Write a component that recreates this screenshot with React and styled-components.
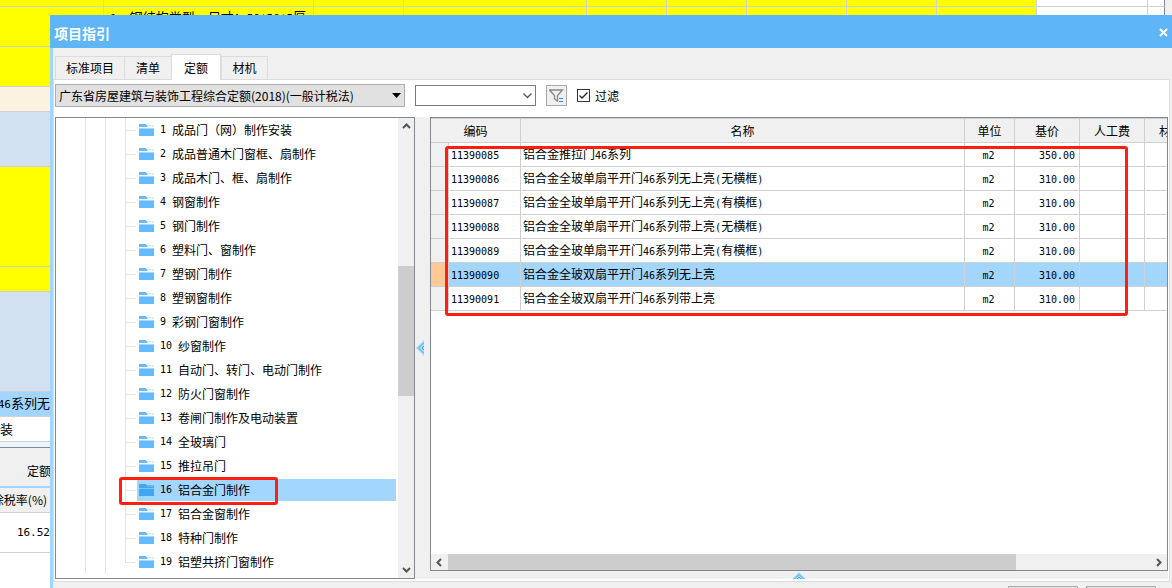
import React, { useState } from "react";
import styled, { createGlobalStyle } from "styled-components";

const GlobalStyle = createGlobalStyle`
    * {
        box-sizing: border-box;
    }

    body {
        margin: 0;
        background: #fff;
        color: #000;
        font-family: "Noto Sans CJK SC", "Noto Sans", sans-serif;
        font-size: 12px;
        line-height: 16px;
    }

    button,
    input,
    select {
        margin: 0;
        padding: 0;
        color: inherit;
        font: inherit;
    }
`;

// Dados
const sheetColumns = [
    { width: 104 },
    { width: 210, text: "1、钢结构类型、尺寸：50*50*5厚" },
    { width: 90 },
    { width: 183 },
    { width: 80 },
    { width: 80 },
    { width: 100 },
    { width: 90 },
    { width: 100 },
    { width: 111, color: "#fff" },
    { width: 17, color: "#fff", line: "#828790" },
];

const sheetRows = [
    { height: 40, color: "#ffff00" },
    { height: 25, color: "#fcf2e1" },
    { height: 55, color: "#d2e1f1" },
    { height: 100, color: "#ffff00" },
    { height: 25, color: "#ffff00" },
    { height: 100, color: "#d2e1f1" },
    { height: 25, color: "#a2d6ff", text: "46系列无", align: "flex-end" },
    { height: 25, color: "#fff", text: "装" },
    { height: 6, color: "#eaf5fe", line: "#828790" },
];

const tabs = ["标准项目", "清单", "定额", "材机"];

const chapters = [
    "成品门（网）制作安装",
    "成品普通木门窗框、扇制作",
    "成品木门、框、扇制作",
    "钢窗制作",
    "钢门制作",
    "塑料门、窗制作",
    "塑钢门制作",
    "塑钢窗制作",
    "彩钢门窗制作",
    "纱窗制作",
    "自动门、转门、电动门制作",
    "防火门窗制作",
    "卷闸门制作及电动装置",
    "全玻璃门",
    "推拉吊门",
    "铝合金门制作",
    "铝合金窗制作",
    "特种门制作",
    "铝塑共挤门窗制作",
];

const quotas = [
    { code: "11390085", name: "铝合金推拉门46系列", unit: "m2", price: "350.00" },
    { code: "11390086", name: "铝合金全玻单扇平开门46系列无上亮(无横框)", unit: "m2", price: "310.00" },
    { code: "11390087", name: "铝合金全玻单扇平开门46系列无上亮(有横框)", unit: "m2", price: "310.00" },
    { code: "11390088", name: "铝合金全玻单扇平开门46系列带上亮(无横框)", unit: "m2", price: "310.00" },
    { code: "11390089", name: "铝合金全玻单扇平开门46系列带上亮(有横框)", unit: "m2", price: "310.00" },
    { code: "11390090", name: "铝合金全玻双扇平开门46系列无上亮", unit: "m2", price: "310.00" },
    { code: "11390091", name: "铝合金全玻双扇平开门46系列带上亮", unit: "m2", price: "310.00" },
];

// Planilha de fundo
const Page = styled.div`
    position: relative;
    min-height: 100vh;
    overflow: hidden;
`;

const Sheet = styled.div`
    font-size: 13px;
    white-space: nowrap;
`;

const SheetLine = styled.div`
    display: flex;
    height: ${(props) => props.$height}px;
    background: #f0f0f0;
`;

const SheetCell = styled.div`
    flex: 0 0 ${(props) => props.$width}px;
    padding: 2px 6px 0;
    background: ${(props) => props.$color || "#ffff00"};
    border-right: 1px solid ${(props) => props.$line || "#d0d0d0"};
    border-bottom: 1px solid #d0d0d0;
    overflow: hidden;
`;

const SideRow = styled.div`
    display: flex;
    align-items: center;
    justify-content: ${(props) => props.$align || "flex-start"};
    width: 50px;
    height: ${(props) => props.$height}px;
    background: ${(props) => props.$color};
    border-bottom: ${(props) => props.$lineWidth || 1}px solid ${(props) => props.$line || "#d0d0d0"};
    overflow: hidden;
`;

const SideTitle = styled.span`
    padding: 8px 0 0 27px;
    font-size: 12px;
`;

const SideHead = styled.span`
    padding-right: 3px;
    font-size: 12px;
`;

// Janela
const Dialog = styled.section`
    position: absolute;
    top: 15px;
    right: 0;
    bottom: 0;
    left: 50px;
    display: flex;
    flex-direction: column;
    background: #f0f0f0;
    border-left: 3px solid #a2d6ff;
`;

const TitleBar = styled.header`
    display: flex;
    align-items: center;
    justify-content: space-between;
    flex: 0 0 33px;
    margin-left: -3px;
    padding: 2px 4px 0;
    background: #5eb5f7;
    color: #fff;
`;

const Title = styled.h1`
    margin: 0;
    font-size: 14px;
    font-weight: 700;
    line-height: 20px;
`;

const CloseButton = styled.button`
    display: flex;
    background: none;
    border: none;
`;

const TabList = styled.div`
    display: flex;
    align-items: flex-end;
    flex: 0 0 31px;
    padding-left: 2px;
`;

const Tab = styled.button`
    min-width: 47px;
    height: ${(props) => (props.$active ? 26 : 23)}px;
    margin-bottom: ${(props) => (props.$active ? -1 : 0)}px;
    padding: 0 ${(props) => (props.$active ? 12 : 10)}px;
    background: ${(props) => (props.$active ? "#fff" : "#f0f0f0")};
    border: 1px solid #dcdcdc;
    border-bottom: none;
    border-right-width: ${(props) => (props.$joined ? 0 : 1)}px;
    z-index: ${(props) => (props.$active ? 1 : 0)};
`;

const Panel = styled.div`
    display: flex;
    flex-direction: column;
    flex: 1;
    min-height: 0;
    margin-right: 2px;
    padding: 0 1px 2px;
    background: #fff;
    border: 1px solid #dcdcdc;
`;

const Toolbar = styled.div`
    display: flex;
    align-items: center;
    flex: 0 0 37px;
    gap: 10px;
    padding-bottom: 6px;
`;

const Field = styled.div`
    display: grid;
    align-items: center;
    justify-items: end;
    width: ${(props) => props.$width}px;

    > * {
        grid-area: 1 / 1;
    }

    > svg {
        pointer-events: none;
        margin-right: 4px;
    }
`;

const LibrarySelect = styled.select`
    appearance: none;
    width: 100%;
    height: 23px;
    padding-left: 3px;
    background: #e1e1e1;
    border: 1px solid #adadad;
    border-radius: 0;
`;

const SearchInput = styled.input`
    width: 100%;
    height: 21px;
    padding: 0 20px 0 4px;
    background: #fff;
    border: 1px solid #7a7a7a;
`;

const FilterButton = styled.button`
    display: flex;
    align-items: center;
    justify-content: center;
    width: 21px;
    height: 21px;
    background: #f0f0f0;
    border: 1px solid #a9a9a9;
`;

const CheckLabel = styled.label`
    display: flex;
    align-items: center;
    gap: 5px;
`;

const CheckBox = styled.span`
    display: grid;

    > * {
        grid-area: 1 / 1;
    }
`;

const CheckInput = styled.input`
    appearance: none;
    width: 13px;
    height: 13px;
    background: #fff;
    border: 1px solid #333;
`;

const Split = styled.div`
    display: flex;
    flex: 1;
    min-height: 0;
    background: #f0f0f0;
`;

// Árvore
const TreePane = styled.div`
    display: flex;
    flex: 0 0 360px;
    background: #fff;
    border: 1px solid #828790;
`;

const Tree = styled.ul`
    flex: 1;
    margin: 0;
    padding: 0 2px 0 29px;
    list-style: none;
    overflow: hidden;
    white-space: nowrap;
`;

const TreeRow = styled.li`
    display: flex;
    height: 24px;
`;

const Guide = styled.span`
    flex: 0 0 20px;
    border-left: 1px solid #e3e3e3;
`;

const Branch = styled.span`
    flex: 0 0 12px;
    border-left: ${(props) => (props.$last ? "none" : "1px solid #e3e3e3")};
`;

const Elbow = styled.span`
    display: block;
    width: 10px;
    height: 13px;
    border-bottom: 1px solid #e3e3e3;
    border-left: ${(props) => (props.$last ? "1px solid #e3e3e3" : "none")};
`;

const TreeItem = styled.span`
    display: flex;
    align-items: center;
    flex: 1;
    gap: 6px;
    margin: 1px 0;
    padding-left: 2px;
    background: ${(props) => (props.$selected ? "#a2d6ff" : "none")};
    cursor: default;
`;

const Ascii = styled.span`
    font-family: "DejaVu Sans Mono", monospace;
    font-size: ${(props) => (props.$large ? 11 : 10)}px;
`;

// Barras de rolagem
const ScrollTrack = styled.div`
    display: flex;
    flex-direction: ${(props) => (props.$vertical ? "column" : "row")};
    flex: 0 0 16px;
    background: #f0f0f0;
`;

const ScrollArrow = styled.button`
    display: flex;
    align-items: center;
    justify-content: center;
    flex: 0 0 17px;
    background: none;
    border: none;
`;

const ScrollSpace = styled.div`
    flex: ${(props) => props.$size};
    background: ${(props) => (props.$thumb ? "#cdcdcd" : "none")};
`;

const Splitter = styled.div`
    display: flex;
    align-items: center;
    flex: 0 0 15px;
    padding-left: 1px;
`;

// Grade de quotas
const RightSide = styled.div`
    display: flex;
    flex-direction: column;
    flex: 1;
    min-width: 0;
`;

const GridPane = styled.div`
    display: flex;
    flex-direction: column;
    flex: 1;
    min-height: 0;
    background: #fff;
    border: 1px solid #828790;
`;

const GridView = styled.div`
    flex: 1;
    overflow: hidden;
`;

const Grid = styled.table`
    width: calc(100% + 43px);
    table-layout: fixed;
    border-spacing: 0;
    white-space: nowrap;
`;

const HeadCell = styled.th`
    height: 25px;
    padding: 0;
    background: #f0f0f0;
    border: solid #d0d0d0;
    border-width: 1px 1px 1px 0;
    font-weight: 400;
`;

const Row = styled.tr`
    background: ${(props) => (props.$selected ? "#a2d6ff" : "#fff")};
`;

const Cell = styled.td`
    height: 24px;
    padding: 0 4px 0 2px;
    border: solid #d0d0d0;
    border-width: 0 1px 1px 0;
    text-align: ${(props) => props.$align || "left"};
`;

const RowMark = styled.td`
    padding: 0;
    background: ${(props) => (props.$selected ? "#ffca96" : "#f0f0f0")};
    border: solid #d0d0d0;
    border-width: 0 1px 1px 0;
`;

const Collapser = styled.div`
    display: flex;
    align-items: flex-end;
    justify-content: center;
    flex: 0 0 8px;
`;

const Footer = styled.footer`
    display: flex;
    justify-content: flex-end;
    flex: 0 0 6px;
    gap: 8px;
    padding: 4px 16px 0 0;
    overflow: hidden;
`;

const FooterButton = styled.button`
    width: 70px;
    height: 23px;
    background: #e1e1e1;
    border: 1px solid #adadad;
`;

// Marcações vermelhas sobre a janela
const Mark = styled.div`
    position: absolute;
    top: ${(props) => props.$top}px;
    left: ${(props) => props.$left}px;
    width: ${(props) => props.$width}px;
    height: ${(props) => props.$height}px;
    border: 3px solid #ff1e0f;
    border-radius: 3px;
    pointer-events: none;
`;

// Letras latinas usam a fonte monoespaçada
const Mixed = ({ text, large }) =>
    text
        .split(/([\x20-\x7e]+)/)
        .filter(Boolean)
        .map((part, i) =>
            /^[\x20-\x7e]/.test(part) ? (
                <Ascii key={i} $large={large}>
                    {part}
                </Ascii>
            ) : (
                part
            )
        );

const FolderIcon = ({ selected }) => {
    const main = selected ? "#42a5f0" : "#64baff";
    return (
        <svg width="15" height="13" viewBox="0 0 15 13" shapeRendering="crispEdges">
            <path d="M0 0h7v1h1v2H0z" fill={main} />
            <path d="M8 1h7v2H8z" fill={selected ? "#64b8f6" : "#d9edfc"} />
            <path d="M0 3h15v1H0z" fill={selected ? "#42a5f0" : "#f4faff"} />
            <path d="M0 4h15v1H0z" fill={selected ? "#7cc5fa" : "#a6d7ff"} />
            <path d="M0 5h15v7H0z" fill={main} />
        </svg>
    );
};

const arrowPaths = {
    up: "M1 6l3.500-3.500L8 6",
    down: "M1 3l3.500 3.500L8 3",
    left: "M6 1L2.500 4.500 6 8",
    right: "M3 1l3.500 3.500L3 8",
};

const Arrow = ({ dir }) => (
    <svg width="9" height="9" viewBox="0 0 9 9">
        <path d={arrowPaths[dir]} fill="none" stroke="#555" strokeWidth="2" />
    </svg>
);

const App = () => {
    const [activeTab, setActiveTab] = useState("定额");
    const [chapter, setChapter] = useState(15);
    const [quota, setQuota] = useState("11390090");
    const [keyword, setKeyword] = useState("");
    const [filtering, setFiltering] = useState(true);

    return (
        <Page>
            <GlobalStyle />
            <Sheet>
                {[7, 40].map((height) => (
                    <SheetLine key={height} $height={height}>
                        {sheetColumns.map((col, i) => (
                            <SheetCell key={i} $width={col.width} $color={col.color} $line={col.line}>
                                {height === 40 && col.text && <Mixed text={col.text} large />}
                            </SheetCell>
                        ))}
                    </SheetLine>
                ))}
                {sheetRows.map((row, i) => (
                    <SideRow key={i} $height={row.height} $color={row.color} $line={row.line} $align={row.align}>
                        {row.text && (
                            <span>
                                <Mixed text={row.text} large />
                            </span>
                        )}
                    </SideRow>
                ))}
                <SideRow $height={40} $color="#f0f0f0" $line="#a2d6ff" $lineWidth={2}>
                    <SideTitle>定额</SideTitle>
                </SideRow>
                <SideRow $height={25} $color="#f0f0f0" $align="flex-end">
                    <SideHead>除税率(%)</SideHead>
                </SideRow>
                <SideRow $height={40} $color="#fff" $align="flex-end">
                    <Mixed text="16.52" large />
                </SideRow>
            </Sheet>

            <Dialog>
                <TitleBar>
                    <Title>项目指引</Title>
                    <CloseButton aria-label="关闭">
                        <svg width="9" height="9" viewBox="0 0 9 9">
                            <path d="M1 1l7 7M8 1L1 8" stroke="#fff" strokeWidth="2" />
                        </svg>
                    </CloseButton>
                </TitleBar>

                <TabList role="tablist">
                    {tabs.map((tab, i) => (
                        <Tab
                            key={tab}
                            role="tab"
                            aria-selected={tab === activeTab}
                            $active={tab === activeTab}
                            $joined={tab !== activeTab && i < tabs.length - 1}
                            onClick={() => setActiveTab(tab)}
                        >
                            {tab}
                        </Tab>
                    ))}
                </TabList>

                <Panel>
                    <Toolbar>
                        <Field $width={350}>
                            <LibrarySelect aria-label="定额库">
                                <option>广东省房屋建筑与装饰工程综合定额(2018)(一般计税法)</option>
                            </LibrarySelect>
                            <svg width="9" height="5" viewBox="0 0 9 5">
                                <path d="M0 0h9L4.500 5z" fill="#000" />
                            </svg>
                        </Field>
                        <Field $width={121}>
                            <SearchInput
                                aria-label="查询"
                                value={keyword}
                                onChange={(e) => setKeyword(e.target.value)}
                            />
                            <svg width="9" height="6" viewBox="0 0 9 6">
                                <path d="M0.500 0.500l4 4 4-4" fill="none" stroke="#555" strokeWidth="1.300" />
                            </svg>
                        </Field>
                        <FilterButton aria-label="筛选">
                            <svg width="15" height="14" viewBox="0 0 15 14">
                                <path
                                    d="M0.500 1h13L8.500 6.500V12L5.500 10V6.500z"
                                    fill="none"
                                    stroke="#858585"
                                    strokeWidth="1.300"
                                />
                                <path d="M10 9.500h4M10 12.500h4" stroke="#1e90f0" />
                            </svg>
                        </FilterButton>
                        <CheckLabel>
                            <CheckBox>
                                <CheckInput
                                    type="checkbox"
                                    checked={filtering}
                                    onChange={(e) => setFiltering(e.target.checked)}
                                />
                                {filtering && (
                                    <svg width="13" height="13" viewBox="0 0 13 13" pointerEvents="none">
                                        <path d="M2.500 6.500L5 9l5.500-5.500" fill="none" stroke="#222" strokeWidth="1.300" />
                                    </svg>
                                )}
                            </CheckBox>
                            过滤
                        </CheckLabel>
                    </Toolbar>

                    <Split>
                        <TreePane>
                            <Tree>
                                {chapters.map((name, i) => (
                                    <TreeRow key={name} onClick={() => setChapter(i)}>
                                        <Guide />
                                        <Guide />
                                        <Branch $last={i === chapters.length - 1}>
                                            <Elbow $last={i === chapters.length - 1} />
                                        </Branch>
                                        <TreeItem $selected={i === chapter}>
                                            <FolderIcon selected={i === chapter} />
                                            <Ascii>{i + 1}</Ascii>
                                            <span>{name}</span>
                                        </TreeItem>
                                    </TreeRow>
                                ))}
                            </Tree>
                            <ScrollTrack $vertical>
                                <ScrollArrow aria-label="向上">
                                    <Arrow dir="up" />
                                </ScrollArrow>
                                <ScrollSpace $size={131} />
                                <ScrollSpace $size={130} $thumb />
                                <ScrollSpace $size={165} />
                                <ScrollArrow aria-label="向下">
                                    <Arrow dir="down" />
                                </ScrollArrow>
                            </ScrollTrack>
                        </TreePane>

                        <Splitter>
                            <svg width="8" height="16" viewBox="0 0 8 16">
                                <path d="M8 0v16L0 8z" fill="#a9dcf8" />
                                <path d="M8 2.500L2.500 8 8 13.500M8 6L6 8l2 2" fill="none" stroke="#3aa9e8" />
                            </svg>
                        </Splitter>

                        <RightSide>
                            <GridPane>
                                <GridView>
                                    <Grid>
                                        <colgroup>
                                            <col width="18" />
                                            <col width="72" />
                                            <col />
                                            <col width="50" />
                                            <col width="65" />
                                            <col width="65" />
                                            <col width="65" />
                                        </colgroup>
                                        <thead>
                                            <tr>
                                                <HeadCell colSpan={2}>编码</HeadCell>
                                                <HeadCell>名称</HeadCell>
                                                <HeadCell>单位</HeadCell>
                                                <HeadCell>基价</HeadCell>
                                                <HeadCell>人工费</HeadCell>
                                                <HeadCell>材料费</HeadCell>
                                            </tr>
                                        </thead>
                                        <tbody>
                                            {quotas.map((item) => (
                                                <Row
                                                    key={item.code}
                                                    $selected={item.code === quota}
                                                    onClick={() => setQuota(item.code)}
                                                >
                                                    <RowMark $selected={item.code === quota} />
                                                    <Cell>
                                                        <Mixed text={item.code} />
                                                    </Cell>
                                                    <Cell>
                                                        <Mixed text={item.name} />
                                                    </Cell>
                                                    <Cell $align="center">
                                                        <Mixed text={item.unit} />
                                                    </Cell>
                                                    <Cell $align="right">
                                                        <Mixed text={item.price} />
                                                    </Cell>
                                                    <Cell />
                                                    <Cell />
                                                </Row>
                                            ))}
                                        </tbody>
                                    </Grid>
                                </GridView>
                                <ScrollTrack>
                                    <ScrollArrow aria-label="向左">
                                        <Arrow dir="left" />
                                    </ScrollArrow>
                                    <ScrollSpace $size={568} $thumb />
                                    <ScrollSpace $size={134} />
                                    <ScrollArrow aria-label="向右">
                                        <Arrow dir="right" />
                                    </ScrollArrow>
                                </ScrollTrack>
                            </GridPane>
                            <Collapser>
                                <svg width="14" height="7" viewBox="0 0 14 7">
                                    <path d="M0 7h14L7 0z" fill="#a9dcf8" />
                                    <path d="M2.500 7L7 2.500 11.500 7M5 7l2-2 2 2" fill="none" stroke="#3aa9e8" />
                                </svg>
                            </Collapser>
                        </RightSide>
                    </Split>
                </Panel>

                <Footer>
                    <FooterButton aria-label="插入" />
                    <FooterButton aria-label="替换" />
                </Footer>
            </Dialog>

            <Mark $top={477} $left={119} $width={159} $height={28} />
            <Mark $top={146} $left={445} $width={683} $height={170} />
        </Page>
    );
};

export default App;
